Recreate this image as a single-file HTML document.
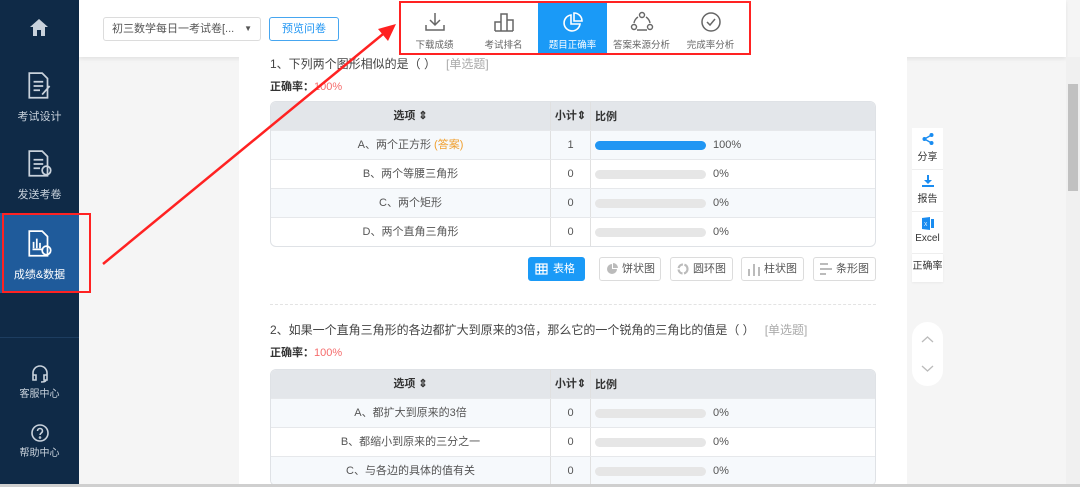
<!DOCTYPE html>
<html><head><meta charset="utf-8"><style>
*{margin:0;padding:0;box-sizing:border-box}
body{width:1080px;height:487px;overflow:hidden;background:#f5f5f5;font-family:"Liberation Sans","Noto Sans CJK SC",sans-serif;font-size:11px;color:#555;position:relative}
.a{position:absolute}
.side{left:0;top:0;width:79px;height:487px;background:#0f2a47}
.si{position:absolute;left:0;width:79px;text-align:center;color:#c9d2dc;font-size:11px}
.hdr{left:79px;top:0;width:987px;height:57px;background:#fff;box-shadow:0 2px 4px rgba(0,0,0,.08)}
.panel{left:239px;top:57px;width:668px;height:430px;background:#fff}
.tbl{position:absolute;left:270px;width:606px;border:1px solid #dfe2e6;border-radius:6px;overflow:hidden;background:#fff}
.row{height:29px;display:flex;border-top:1px solid #e6e8eb;align-items:center;color:#555}
.row:first-child{border-top:0;background:#e3e6ea;color:#333;font-weight:bold;height:28px}
.row.alt{background:#f6f9fc}
.c1{width:280px;text-align:center;border-right:1px solid #e0e0e0;height:100%;line-height:29px}
.c2{width:40px;text-align:center;border-right:1px solid #e0e0e0;height:100%;line-height:29px}
.c3{padding-left:4px;display:flex;align-items:center;gap:7px}
.bar{width:111px;height:9px;border-radius:5px;background:#e6e6e6}
.bar.f{background:#2196f3}
.btn{position:absolute;top:257px;height:24px;border:1px solid #dcdcdc;border-radius:3px;background:#fff;color:#555;font-size:11px;line-height:22px;padding-left:22px}
.tab{position:absolute;top:3px;height:51px;width:69px;text-align:center;color:#666;font-size:9.5px}
.tab svg{display:block;margin:8px auto 4px}
.fl{position:absolute;left:912px;width:31px;background:#fff;text-align:center;font-size:10px;color:#333;border-bottom:1px solid #eee}
.q{font-size:12px;color:#444}
</style></head><body>
<div class="a side"></div>
<svg class="a" style="left:29px;top:18px" width="20" height="19" viewBox="0 0 20 19"><path d="M10 1L1 9h3v9h4v-6h4v6h4V9h3z" fill="#c9d2dc"/></svg>
<svg class="a" style="left:26px;top:71px" width="28" height="30" viewBox="0 0 26 28" fill="none" stroke="#c9d2dc" stroke-width="1.6"><path d="M3 2h12l5 5v18H3z M7 10h9M7 14h9M7 18h6M15 22l7-8"/></svg>
<div class="si" style="top:108px">考试设计</div>
<svg class="a" style="left:26px;top:149px" width="28" height="30" viewBox="0 0 26 28" fill="none" stroke="#c9d2dc" stroke-width="1.6"><path d="M3 2h12l5 5v18H3z M7 10h9M7 14h9M7 18h6"/><circle cx="19" cy="20" r="4"/></svg>
<div class="si" style="top:186px">发送考卷</div>
<div class="a" style="left:0;top:213px;width:79px;height:80px;background:#1f5b9b"></div>
<div class="a" style="left:73px;top:253px;width:0;height:0;border:6px solid transparent;border-right-color:#f5f5f5;margin-top:-6px"></div>
<svg class="a" style="left:26px;top:229px" width="28" height="30" viewBox="0 0 26 28" fill="none" stroke="#fff" stroke-width="1.6"><path d="M3 2h12l5 5v18H3z M7 18V12M10 18V9M13 18V13M6 19h10"/><circle cx="19" cy="20" r="4"/></svg>
<div class="si" style="top:266px;color:#fff">成绩&amp;数据</div>
<div class="a" style="left:0;top:337px;width:79px;height:1px;background:#1d3d60"></div>
<svg class="a" style="left:30px;top:364px" width="20" height="20" viewBox="0 0 20 20" fill="none" stroke="#c9d2dc" stroke-width="1.6"><path d="M3 12V9a7 7 0 0114 0v3M3 11h3v5H3zM14 11h3v5h-3zM16 16q0 2-5 2"/></svg>
<div class="si" style="top:385px;font-size:10px">客服中心</div>
<svg class="a" style="left:30px;top:423px" width="20" height="20" viewBox="0 0 20 20" fill="none" stroke="#c9d2dc" stroke-width="1.6"><circle cx="10" cy="10" r="8"/><path d="M7.5 8a2.5 2.5 0 115 0c0 2-2.5 2-2.5 4"/><circle cx="10" cy="14.5" r=".5"/></svg>
<div class="si" style="top:444px;font-size:10px">帮助中心</div>

<div class="a hdr"></div>
<div class="a" style="left:103px;top:17px;width:158px;height:24px;border:1px solid #dcdcdc;border-radius:3px;background:#fff;line-height:22px;padding-left:8px;color:#555">初三数学每日一考试卷[...<span style="position:absolute;right:8px;font-size:8px">▼</span></div>
<div class="a" style="left:269px;top:17px;width:70px;height:24px;border:1px solid #46a6f0;border-radius:3px;color:#2196f3;text-align:center;line-height:22px">预览问卷</div>

<div class="tab" style="left:400px"><svg width="22" height="22" viewBox="0 0 22 22" fill="none" stroke="#666" stroke-width="1.5"><path d="M11 2v12M6 9l5 5 5-5M2 14v5h18v-5"/></svg>下载成绩</div>
<div class="tab" style="left:469px"><svg width="22" height="22" viewBox="0 0 22 22" fill="none" stroke="#666" stroke-width="1.5"><path d="M2 20V11h6v9M8 20V3h6v17M14 20V9h6v11M2 20h18"/></svg>考试排名</div>
<div class="tab" style="left:538px;background:#1a9af7;color:#fff"><svg width="22" height="22" viewBox="0 0 22 22" fill="none" stroke="#fff" stroke-width="1.6"><path d="M9 4a8 8 0 109 9H9z M12 2v8h8a8 8 0 00-8-8z"/></svg>题目正确率</div>
<div class="tab" style="left:607px"><svg width="24" height="22" viewBox="0 0 24 22" fill="none" stroke="#666" stroke-width="1.4"><circle cx="12" cy="4" r="2.5"/><circle cx="4" cy="16" r="2.5"/><circle cx="20" cy="16" r="2.5"/><path d="M8 6A9 9 0 004 12M16 6a9 9 0 014 6M7 19h10"/></svg>答案来源分析</div>
<div class="tab" style="left:676px"><svg width="22" height="22" viewBox="0 0 22 22" fill="none" stroke="#666" stroke-width="1.5"><circle cx="11" cy="11" r="9"/><path d="M7 11l3 3 5-6"/></svg>完成率分析</div>
<div class="a" style="left:399px;top:1px;width:352px;height:54px;border:2px solid #f22"></div>

<div class="a panel"></div>
<div class="a q" style="left:270px;top:55px">1、下列两个图形相似的是（ ）&nbsp;&nbsp; <span style="color:#aaa">[单选题]</span></div>
<div class="a" style="left:270px;top:78px;color:#333;font-weight:bold">正确率：<span style="color:#f56c6c;font-weight:normal">100%</span></div>
<div class="tbl" style="top:101px">
<div class="row"><div class="c1">选项 ⇕</div><div class="c2">小计⇕</div><div class="c3">比例</div></div>
<div class="row alt"><div class="c1">A、两个正方形 <span style="color:#f0a030">(答案)</span></div><div class="c2">1</div><div class="c3"><div class="bar f"></div>100%</div></div>
<div class="row"><div class="c1">B、两个等腰三角形</div><div class="c2">0</div><div class="c3"><div class="bar"></div>0%</div></div>
<div class="row alt"><div class="c1">C、两个矩形</div><div class="c2">0</div><div class="c3"><div class="bar"></div>0%</div></div>
<div class="row"><div class="c1">D、两个直角三角形</div><div class="c2">0</div><div class="c3"><div class="bar"></div>0%</div></div>
</div>
<div class="btn" style="left:528px;width:57px;background:#1a9af7;border-color:#1a9af7;color:#fff;padding-left:24px">表格<svg class="a" style="left:6px;top:5px" width="13" height="12" viewBox="0 0 13 12" fill="none" stroke="#fff" stroke-width="1.2"><path d="M1 1h11v10H1zM1 4h11M1 7.5h11M4.5 1v10M8 1v10"/></svg></div>
<div class="btn" style="left:599px;width:62px">饼状图<svg class="a" style="left:6px;top:5px" width="12" height="12" viewBox="0 0 12 12"><path d="M6 1a5 5 0 105 5H6z" fill="#bbb"/><path d="M7 0v5h5a5 5 0 00-5-5z" fill="#bbb"/></svg></div>
<div class="btn" style="left:670px;width:63px">圆环图<svg class="a" style="left:6px;top:5px" width="12" height="12" viewBox="0 0 12 12" fill="none" stroke="#bbb" stroke-width="2.2"><circle cx="6" cy="6" r="4.5" stroke-dasharray="6 1.5"/></svg></div>
<div class="btn" style="left:741px;width:63px">柱状图<svg class="a" style="left:6px;top:5px" width="12" height="13" viewBox="0 0 12 13" fill="#bbb"><rect x="0" y="6" width="2" height="7"/><rect x="5" y="1" width="2" height="12"/><rect x="10" y="4" width="2" height="9"/></svg></div>
<div class="btn" style="left:813px;width:63px">条形图<svg class="a" style="left:6px;top:5px" width="12" height="12" viewBox="0 0 12 12" fill="#bbb"><rect x="0" y="0" width="8" height="2"/><rect x="0" y="5" width="12" height="2"/><rect x="0" y="10" width="6" height="2"/></svg></div>
<div class="a" style="left:270px;top:304px;width:606px;border-top:1px dashed #e3e3e3"></div>
<div class="a q" style="left:270px;top:321px">2、如果一个直角三角形的各边都扩大到原来的3倍，那么它的一个锐角的三角比的值是（ ）&nbsp;&nbsp; <span style="color:#aaa">[单选题]</span></div>
<div class="a" style="left:270px;top:344px;color:#333;font-weight:bold">正确率：<span style="color:#f56c6c;font-weight:normal">100%</span></div>
<div class="tbl" style="top:369px">
<div class="row"><div class="c1">选项 ⇕</div><div class="c2">小计⇕</div><div class="c3">比例</div></div>
<div class="row alt"><div class="c1">A、都扩大到原来的3倍</div><div class="c2">0</div><div class="c3"><div class="bar"></div>0%</div></div>
<div class="row"><div class="c1">B、都缩小到原来的三分之一</div><div class="c2">0</div><div class="c3"><div class="bar"></div>0%</div></div>
<div class="row alt"><div class="c1">C、与各边的具体的值有关</div><div class="c2">0</div><div class="c3"><div class="bar"></div>0%</div></div>
</div>

<div class="fl" style="top:128px;height:42px;padding-top:5px"><svg width="12" height="12" viewBox="0 0 12 12" fill="#1a8cf0"><circle cx="9.5" cy="2" r="2"/><circle cx="2.5" cy="6" r="2"/><circle cx="9.5" cy="10" r="2"/><path d="M2.5 6L9.5 2M2.5 6l7 4" stroke="#1a8cf0" stroke-width="1.3"/></svg><div>分享</div></div>
<div class="fl" style="top:170px;height:42px;padding-top:5px"><svg width="12" height="12" viewBox="0 0 12 12" fill="#1a8cf0"><path d="M5 0h2v5h3L6 9 2 5h3zM0 10h12v2H0z"/></svg><div>报告</div></div>
<div class="fl" style="top:212px;height:42px;padding-top:5px"><svg width="12" height="13" viewBox="0 0 12 13" fill="#1a8cf0"><path d="M0 1l8-1v13L0 12zM9 2h3v9H9z"/><text x="2" y="9" font-size="5" fill="#fff" font-family="Liberation Sans">X</text></svg><div>Excel</div></div>
<div class="fl" style="top:254px;height:28px;line-height:26px;border:0;box-shadow:0 1px 2px rgba(0,0,0,.05)">正确率</div>
<div class="a" style="left:912px;top:322px;width:31px;height:64px;background:#fff;border-radius:16px"></div>
<svg class="a" style="left:920px;top:332px" width="15" height="45" viewBox="0 0 15 45" fill="none" stroke="#bbb" stroke-width="1.3"><path d="M2 10l5.5-5 5.5 5M2 34l5.5 5 5.5-5"/></svg>

<div class="a" style="left:1066px;top:57px;width:14px;height:430px;background:#f0f0f0"></div>
<div class="a" style="left:1068px;top:84px;width:10px;height:107px;background:#c1c1c1"></div>
<div class="a" style="left:0;top:484px;width:1080px;height:3px;background:#cfcfcf"></div>

<div class="a" style="left:2px;top:213px;width:89px;height:80px;border:2px solid #f22"></div>
<svg class="a" style="left:0;top:0" width="1080" height="487"><line x1="103" y1="264" x2="383" y2="34" stroke="#f22" stroke-width="2.5"/><path d="M396 24L378 29L388 41z" fill="#f22"/></svg>
</body></html>
